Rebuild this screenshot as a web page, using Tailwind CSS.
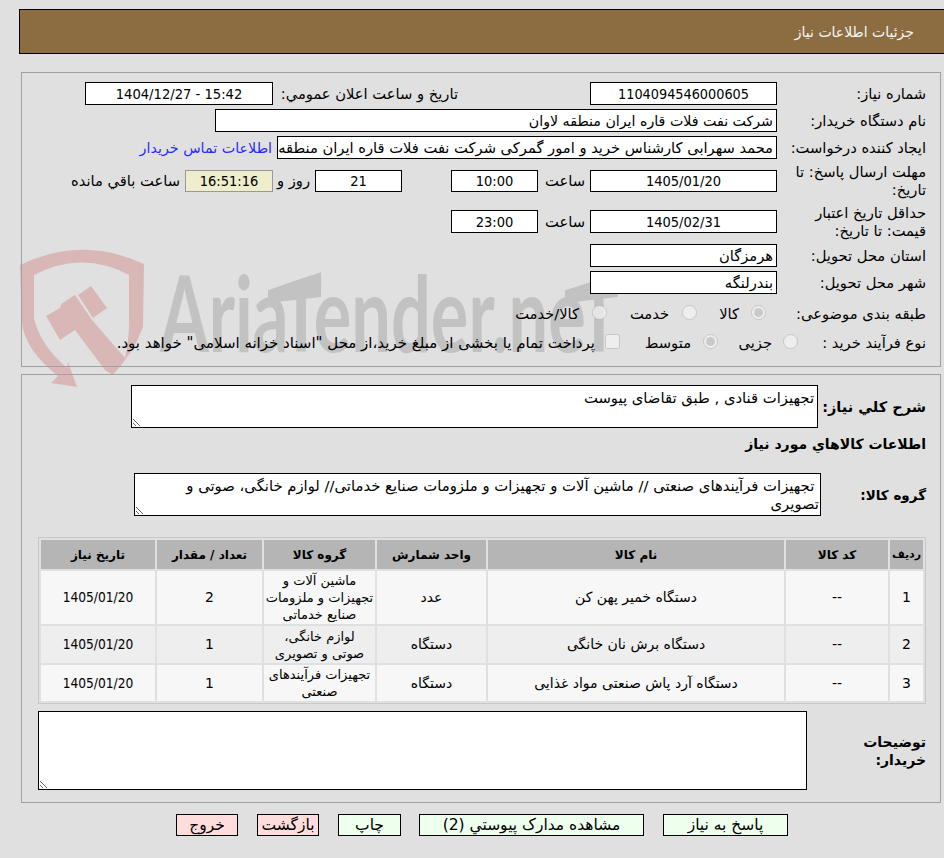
<!DOCTYPE html>
<html lang="fa" dir="rtl">
<head>
<meta charset="utf-8">
<title>جزئیات اطلاعات نیاز</title>
<script src="https://cdn.jsdelivr.net/npm/@tailwindcss/browser@4"></script>
</head>
<body class="bg-[#e0e0e0] text-black text-[14.7px] leading-[18px] [font-family:'DejaVu_Sans',sans-serif] overflow-hidden">
<div class="relative w-[944px] h-[858px] overflow-hidden pt-[9px]">

  <svg class="absolute left-0 top-0 pointer-events-none" width="944" height="858" viewBox="0 0 944 858" aria-hidden="true">
    <path fill="#d9b7b7" fill-rule="evenodd" d="M20 265 Q82 235 144 264 L143 327 Q135 350 113 375 L105 370 L75 330 L60 340 L46 316 L60 308 L61 304 L75 295 L92 320 L125 358 Q129 340 129 323 L129 275 Q82 250 34 275 L34 318 Q40 345 67 368 L68 362 L77 387 L51 383 L58 376 Q25 350 22 323 Z"/>
    <path fill="#d9b7b7" d="M78 295 L91 286 L107 308 L93 318 Z"/>
    <text x="160" y="352" fill="#c2c2c2" font-family="Lato, sans-serif" font-weight="700" font-size="105" textLength="460" lengthAdjust="spacingAndGlyphs" direction="ltr" style="unicode-bidi:bidi-override">AriaTender.neT</text>
    <polygon fill="#c2c2c2" points="268,290 321,272 321,297 268,303"/>
    <polygon fill="#e0e0e0" points="255,262 321,262 321,272 268,290 255,294"/>
    <polygon fill="#c2c2c2" points="565,290 618,274 618,297 565,303"/>
    <polygon fill="#e0e0e0" points="552,262 618,262 618,274 565,290 552,294"/>
  </svg>

  <div class="relative z-10 w-[925px] h-[45px] flex items-center bg-[#8c6d42] border border-r-0 border-black pr-[30px] text-[14px] text-[#f5f5f5]">جزئیات اطلاعات نیاز</div>

  <section class="relative z-10 mr-[3px] mt-[18px] w-[920px] h-[295px] border border-[#a0a0a0] pt-[9px] pr-[14px]">
    <div class="flex items-center h-[23px]">
      <div class="w-[149px] pl-[8px]">شماره نیاز:</div>
      <div class="w-[187px] h-[23px] flex items-center justify-center bg-white border border-black text-[14.3px] [font-family:'DejaVu_Sans_Condensed',sans-serif]">1104094546000605</div>
      <div class="w-[317px] pr-[132px] whitespace-nowrap">تاریخ و ساعت اعلان عمومي:</div>
      <div dir="ltr" class="w-[188px] h-[23px] flex items-center justify-center bg-white border border-black text-[14.6px] [font-family:'DejaVu_Sans_Condensed',sans-serif]">1404/12/27 - 15:42</div>
    </div>
    <div class="flex items-center h-[23px] mt-[4px]">
      <div class="w-[149px] pl-[8px]">نام دستگاه خریدار:</div>
      <div class="w-[562px] h-[23px] flex items-center bg-white border border-black px-[3px] text-[14.2px]">شرکت نفت فلات قاره ایران منطقه لاوان</div>
    </div>
    <div class="flex items-center h-[23px] mt-[4px]">
      <div class="w-[149px] pl-[8px] whitespace-nowrap">ایجاد کننده درخواست:</div>
      <div class="w-[500px] h-[23px] flex items-center bg-white border border-black px-[3px] whitespace-nowrap overflow-hidden">محمد سهرابی کارشناس خرید و امور گمرکی شرکت نفت فلات قاره ایران منطقه لاوان</div>
      <a class="mr-[5px] text-[#2a2aff] whitespace-nowrap text-[14.3px]">اطلاعات تماس خریدار</a>
    </div>
    <div class="flex items-center h-[36px] mt-[4px]">
      <div class="w-[149px] pl-[8px]">مهلت ارسال پاسخ: تا تاریخ:</div>
      <div class="w-[187px] h-[22px] flex items-center justify-center bg-white border border-black text-[14.5px] [font-family:'DejaVu_Sans_Condensed',sans-serif]">1405/01/20</div>
      <div class="w-[52px] pr-[5px]">ساعت</div>
      <div class="w-[87px] h-[22px] flex items-center justify-center bg-white border border-black text-[14.5px] [font-family:'DejaVu_Sans_Condensed',sans-serif]">10:00</div>
      <div class="w-[49px]"></div>
      <div class="w-[87px] h-[22px] flex items-center justify-center bg-white border border-black text-[14.5px] [font-family:'DejaVu_Sans_Condensed',sans-serif]">21</div>
      <div class="w-[42px] pr-[5px] whitespace-nowrap">روز و</div>
      <div class="w-[88px] h-[22px] flex items-center justify-center bg-[#eeeecc] border border-[#999] text-[14.5px] [font-family:'DejaVu_Sans_Condensed',sans-serif]">16:51:16</div>
      <div class="pr-[5px] whitespace-nowrap">ساعت باقي مانده</div>
    </div>
    <div class="flex items-center h-[35px] mt-[5px]">
      <div class="w-[149px] pl-[8px]">حداقل تاریخ اعتبار قیمت: تا تاریخ:</div>
      <div class="w-[187px] h-[23px] flex items-center justify-center bg-white border border-black text-[14.5px] [font-family:'DejaVu_Sans_Condensed',sans-serif]">1405/02/31</div>
      <div class="w-[52px] pr-[5px]">ساعت</div>
      <div class="w-[87px] h-[23px] flex items-center justify-center bg-white border border-black text-[14.5px] [font-family:'DejaVu_Sans_Condensed',sans-serif]">23:00</div>
    </div>
    <div class="flex items-center h-[23px] mt-[5px]">
      <div class="w-[149px] pl-[8px]">استان محل تحویل:</div>
      <div class="w-[187px] h-[23px] flex items-center bg-white border border-black px-[3px]">هرمزگان</div>
    </div>
    <div class="flex items-center h-[23px] mt-[4px]">
      <div class="w-[149px] pl-[8px]">شهر محل تحویل:</div>
      <div class="w-[187px] h-[23px] flex items-center bg-white border border-black px-[3px]">بندرلنگه</div>
    </div>
    <div class="flex items-center h-[20px] mt-[10px]">
      <div class="w-[149px] pl-[8px] whitespace-nowrap">طبقه بندی موضوعی:</div>
      <input type="radio" disabled checked name="a" class="w-[15px] h-[15px] mr-[11px] -mt-[4px] ml-0">
      <span class="w-[42px] mr-[12px]">کالا</span>
      <input type="radio" disabled name="a" class="w-[15px] h-[15px] -mt-[4px]">
      <span class="w-[62px] mr-[13px]">خدمت</span>
      <input type="radio" disabled name="a" class="w-[15px] h-[15px] -mt-[4px]">
      <span class="mr-[13px]">کالا/خدمت</span>
    </div>
    <div class="flex items-center h-[24px] mt-[7px]">
      <div class="w-[149px] pl-[8px] whitespace-nowrap">نوع فرآیند خرید :</div>
      <input type="radio" disabled name="b" class="w-[15px] h-[15px] -mr-[21px] ml-[11px] -mt-[3px]">
      <span class="w-[50px]">جزیی</span>
      <input type="radio" disabled checked name="b" class="w-[15px] h-[15px] -mt-[3px] mr-[4px]">
      <span class="w-[60px] mr-[12px]">متوسط</span>
      <input type="checkbox" disabled class="w-[15px] h-[15px] -mt-[3px] mr-[11px]">
      <span class="mr-[10px] whitespace-nowrap text-[15px]">پرداخت تمام یا بخشی از مبلغ خرید،از محل "اسناد خزانه اسلامی" خواهد بود.</span>
    </div>
  </section>

  <section class="relative z-10 mr-[3px] mt-[7px] w-[920px] h-[429px] border border-[#a0a0a0] pt-[10px] pr-[14px]">
    <div class="flex items-center h-[43px]">
      <div class="w-[108px] font-bold text-[14.5px] whitespace-nowrap">شرح كلي نياز:</div>
      <textarea readonly class="w-[687px] h-[43px] bg-white border border-black px-[3px] py-[3px] text-[14.8px] leading-[18px] block">تجهیزات قنادی , طبق تقاضای پیوست</textarea>
    </div>
    <div class="h-[32px] flex items-center font-bold text-[14px]">اطلاعات كالاهاي مورد نياز</div>
    <div class="flex items-center h-[43px] mt-[13px]">
      <div class="w-[105px] font-bold text-[13.5px]">گروه کالا:</div>
      <textarea readonly class="w-[687px] h-[43px] bg-white border border-black px-[1px] py-[3px] text-[14.8px] leading-[18px] block"> تجهیزات فرآیندهای صنعتی // ماشین آلات و تجهیزات و ملزومات صنایع خدماتی// لوازم خانگی، صوتی و تصویری</textarea>
    </div>
    <table class="mt-[21px] w-[888px] table-fixed border-separate border-spacing-[2px] border border-[#c8c8c8] text-center">
      <thead>
        <tr class="h-[29px] bg-[#b5b5b5] font-bold text-[12px]">
          <th class="w-[33px] p-0 text-[11px]">رديف</th>
          <th class="w-[102px] p-0">کد کالا</th>
          <th class="w-[296px] p-0">نام کالا</th>
          <th class="w-[109px] p-0">واحد شمارش</th>
          <th class="w-[111px] p-0">گروه کالا</th>
          <th class="w-[105px] p-0">تعداد / مقدار</th>
          <th class="w-[114px] p-0">تاریخ نیاز</th>
        </tr>
      </thead>
      <tbody class="leading-[17px] text-[14px]">
        <tr class="h-[53px] bg-[#f7f7f7]">
          <td class="p-0">1</td><td class="p-0">--</td><td class="p-0">دستگاه خمیر پهن کن</td><td class="p-0">عدد</td>
          <td class="p-0 text-[13px]">ماشین آلات و تجهیزات و ملزومات صنایع خدماتی</td><td class="p-0">2</td><td class="p-0 text-[13.6px] [font-family:'DejaVu_Sans_Condensed',sans-serif]">1405/01/20</td>
        </tr>
        <tr class="h-[37px] bg-[#eeeeee]">
          <td class="p-0">2</td><td class="p-0">--</td><td class="p-0">دستگاه برش نان خانگی</td><td class="p-0">دستگاه</td>
          <td class="p-0 text-[13px]">لوازم خانگی،<br>صوتی و تصویری</td><td class="p-0">1</td><td class="p-0 text-[13.6px] [font-family:'DejaVu_Sans_Condensed',sans-serif]">1405/01/20</td>
        </tr>
        <tr class="h-[36px] bg-[#f7f7f7]">
          <td class="p-0">3</td><td class="p-0">--</td><td class="p-0">دستگاه آرد پاش صنعتی مواد غذایی</td><td class="p-0">دستگاه</td>
          <td class="p-0 text-[13px]">تجهیزات فرآیندهای صنعتی</td><td class="p-0">1</td><td class="p-0 text-[13.6px] [font-family:'DejaVu_Sans_Condensed',sans-serif]">1405/01/20</td>
        </tr>
      </tbody>
    </table>
    <div class="flex items-center h-[79px] mt-[7px]">
      <div class="w-[119px] pl-[30px] font-bold text-[14px]">توضيحات خريدار:</div>
      <textarea readonly class="w-[769px] h-[79px] bg-white border border-black block"></textarea>
    </div>
  </section>

  <div class="relative z-10 flex mt-[11px] pr-[156px] gap-[19px] text-[15.5px]">
    <button class="w-[125px] h-[22px] pt-[2px] bg-[#eeffee] border border-black leading-none">پاسخ به نیاز</button>
    <button class="w-[225px] h-[22px] pt-[2px] bg-[#eeffee] border border-black leading-none">مشاهده مدارک پیوستي (2)</button>
    <button class="w-[63px] h-[22px] pt-[2px] -mr-[1px] bg-[#eeffee] border border-black leading-none">چاپ</button>
    <button class="w-[62px] h-[22px] pt-[2px] bg-[#ffdddd] border border-black leading-none">بازگشت</button>
    <button class="w-[62px] h-[22px] pt-[2px] bg-[#ffdddd] border border-black leading-none">خروج</button>
  </div>
</div>
</body>
</html>
